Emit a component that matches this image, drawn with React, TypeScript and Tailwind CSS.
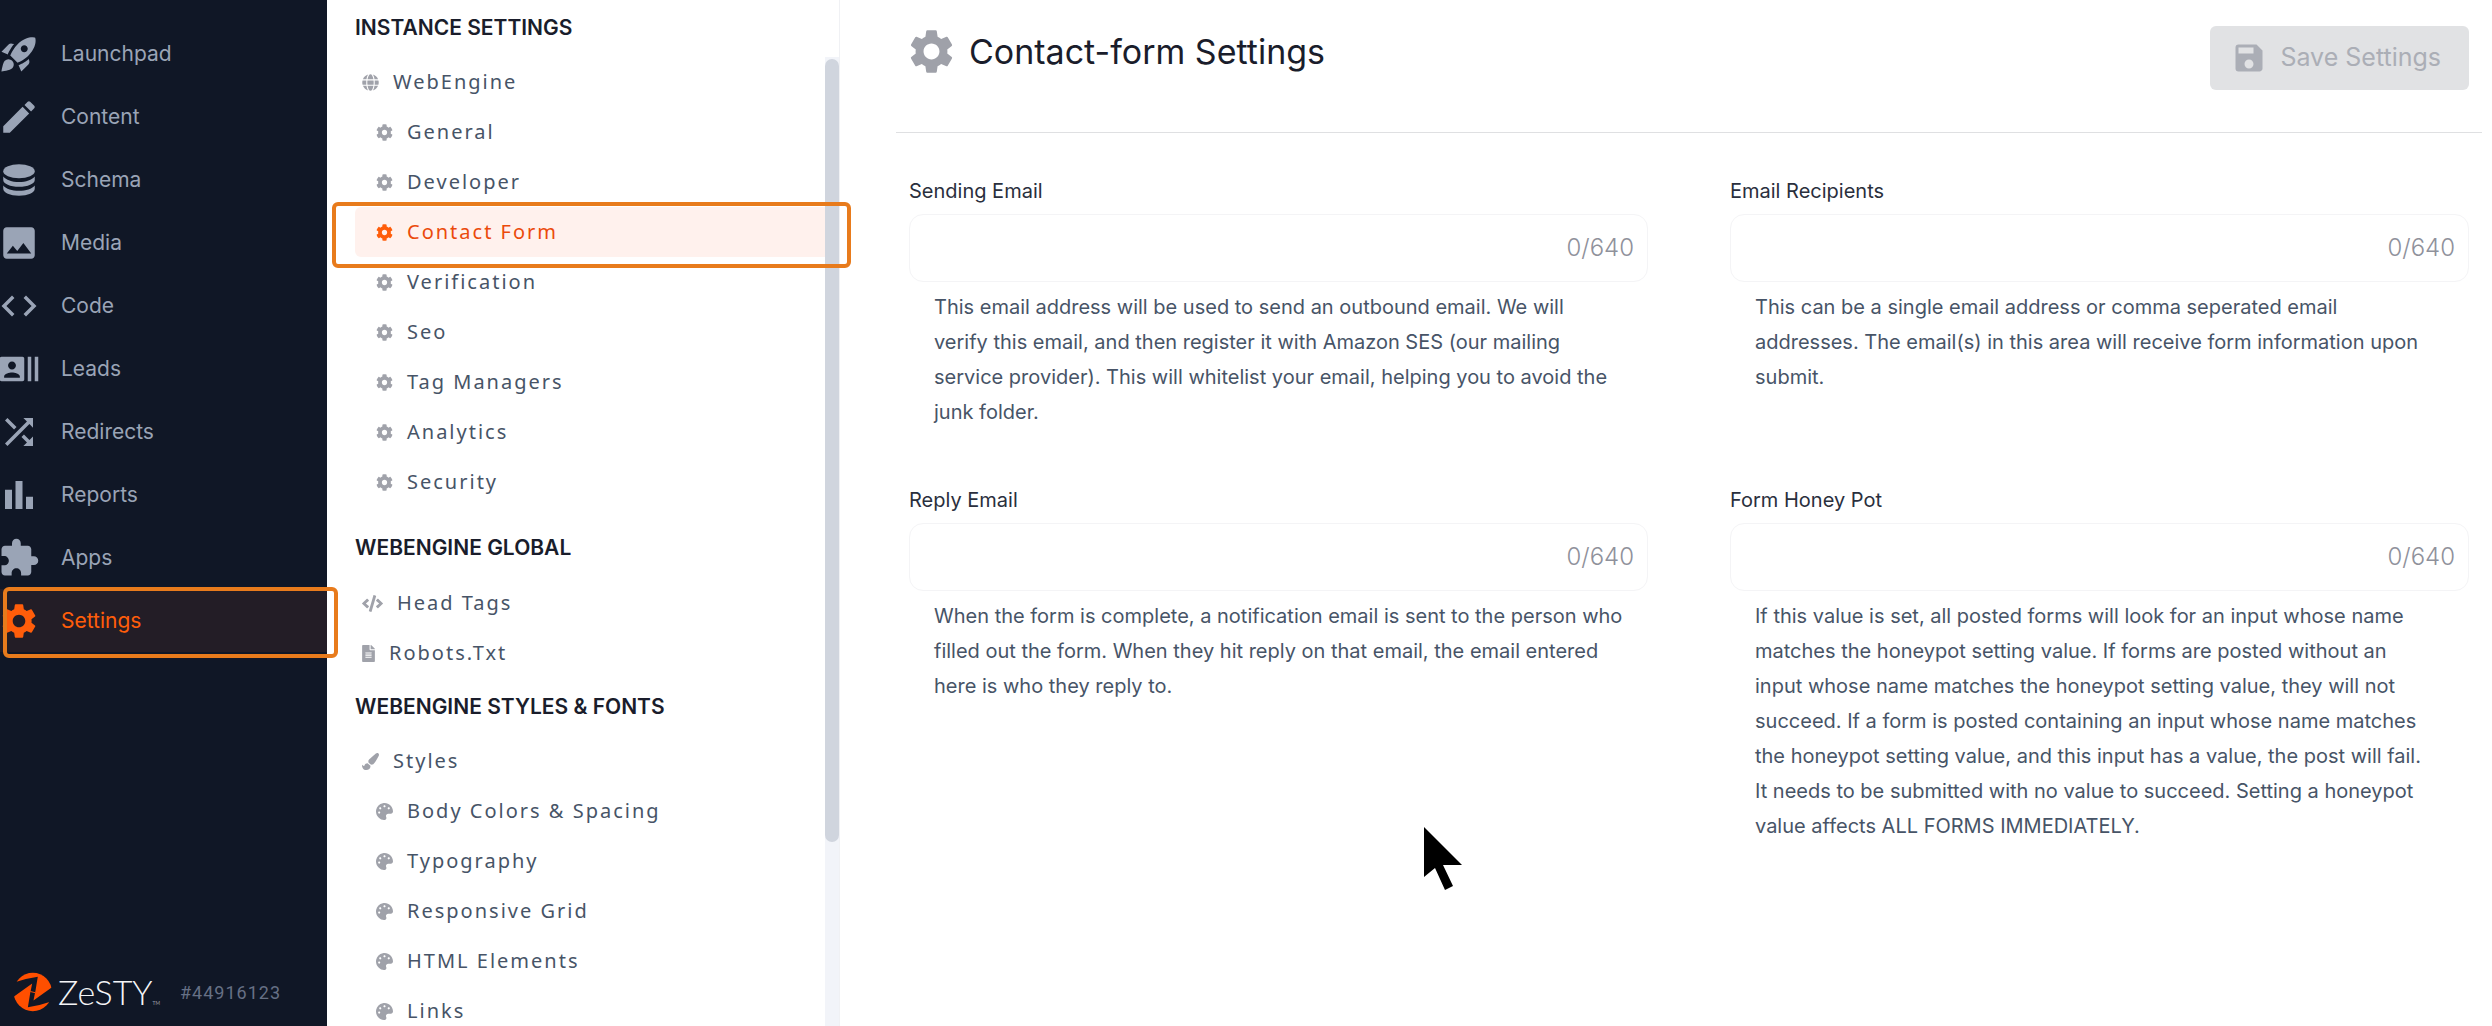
import React from "react";
import type { IconType } from "react-icons";
import {
  MdBarChart,
  MdCode,
  MdEdit,
  MdExtension,
  MdImage,
  MdRecentActors,
  MdRocketLaunch,
  MdSave,
  MdSettings,
  MdShuffle,
} from "react-icons/md";
import { FaCode, FaCog, FaFileAlt, FaGlobe, FaPaintBrush, FaPalette } from "react-icons/fa";

function SchemaIcon({ className }: { className?: string }) {
  return (
    <svg viewBox="0 0 24 24" fill="currentColor" className={className} aria-hidden="true">
      <ellipse cx="12" cy="7" rx="9" ry="4" />
      <path d="M3 10C4.600 12 8 13.200 12 13.200s7.400-1.200 9-3.200V12c0 2.200-4 3.900-9 3.900S3 14.200 3 12z" />
      <path d="M3 15.200C4.600 17.200 8 18.200 12 18.200s7.400-1 9-3V17c0 2.200-4 4-9 4s-9-1.800-9-4z" />
    </svg>
  );
}

type MainItem = { label: string; icon: React.ComponentType<{ className?: string }>; active?: boolean };

const mainItems: MainItem[] = [
  { label: "Launchpad", icon: MdRocketLaunch },
  { label: "Content", icon: MdEdit },
  { label: "Schema", icon: SchemaIcon },
  { label: "Media", icon: MdImage },
  { label: "Code", icon: MdCode },
  { label: "Leads", icon: MdRecentActors },
  { label: "Redirects", icon: MdShuffle },
  { label: "Reports", icon: MdBarChart },
  { label: "Apps", icon: MdExtension },
  { label: "Settings", icon: MdSettings, active: true },
];

type TreeItem = { label: string; icon: IconType; iconWidth?: string; child?: boolean; active?: boolean };

const webEngine: TreeItem[] = [
  { label: "WebEngine", icon: FaGlobe },
  { label: "General", icon: FaCog, child: true },
  { label: "Developer", icon: FaCog, child: true },
  { label: "Contact Form", icon: FaCog, child: true, active: true },
  { label: "Verification", icon: FaCog, child: true },
  { label: "Seo", icon: FaCog, child: true },
  { label: "Tag Managers", icon: FaCog, child: true },
  { label: "Analytics", icon: FaCog, child: true },
  { label: "Security", icon: FaCog, child: true },
];

const globalItems: TreeItem[] = [
  { label: "Head Tags", icon: FaCode, iconWidth: "w-[21px]" },
  { label: "Robots.Txt", icon: FaFileAlt, iconWidth: "w-[13px]" },
];

const styleItems: TreeItem[] = [
  { label: "Styles", icon: FaPaintBrush },
  { label: "Body Colors & Spacing", icon: FaPalette, child: true },
  { label: "Typography", icon: FaPalette, child: true },
  { label: "Responsive Grid", icon: FaPalette, child: true },
  { label: "HTML Elements", icon: FaPalette, child: true },
  { label: "Links", icon: FaPalette, child: true },
];

const fields = [
  {
    id: "sending-email",
    label: "Sending Email",
    help: "This email address will be used to send an outbound email. We will verify this email, and then register it with Amazon SES (our mailing service provider). This will whitelist your email, helping you to avoid the junk folder.",
  },
  {
    id: "email-recipients",
    label: "Email Recipients",
    help: "This can be a single email address or comma seperated email addresses. The email(s) in this area will receive form information upon submit.",
  },
  {
    id: "reply-email",
    label: "Reply Email",
    help: "When the form is complete, a notification email is sent to the person who filled out the form. When they hit reply on that email, the email entered here is who they reply to.",
  },
  {
    id: "form-honey-pot",
    label: "Form Honey Pot",
    help: "If this value is set, all posted forms will look for an input whose name matches the honeypot setting value. If forms are posted without an input\u00a0whose name matches the honeypot setting value, they will not succeed. If a form is posted containing an input whose name matches the honeypot setting value, and this input has a value, the post will fail. It\u00a0needs to be submitted with no value to succeed. Setting a honeypot value affects ALL FORMS IMMEDIATELY.",
  },
];

function ZestyLogo() {
  return (
    <a href="#home" aria-label="Zesty" className="flex items-center gap-[6px] text-[#f4f5f7]">
      <svg viewBox="42 37 115 118" className="h-10 w-[38px]" aria-hidden="true">
        <circle cx="99" cy="96" r="58" fill="#ff4f00" />
        <path d="M30 72Q70 56 114 50L106 98L92 95L97 70L36 114Z" fill="#101726" />
        <path d="M168 120Q128 136 84 142L92 94L106 97L101 122L162 78Z" fill="#101726" />
        <path d="M91 93L107 97V100L91 96Z" fill="#ff4f00" />
      </svg>
      <span className="flex items-end font-['Lato',sans-serif] text-[34px] leading-[40px] font-light">
        ZeSTY<span className="pb-1 text-[5px] leading-[10px]">TM</span>
      </span>
    </a>
  );
}

function MainNav() {
  return (
    <nav aria-label="Main" className="flex w-[327px] shrink-0 flex-col bg-[#101726] pt-[22px]">
      <ul>
        {mainItems.map(({ label, icon: Icon, active }) => (
          <li key={label}>
            <a
              href={"#" + label.toLowerCase()}
              className={
                active
                  ? "flex h-[63px] items-center gap-[21px] bg-[#231d26] text-[21px] text-[#ff5d0a]"
                  : "flex h-[63px] items-center gap-[21px] text-[21px] text-[#9aa4b6]"
              }
            >
              <Icon className="-ml-[2px] h-[42px] w-[42px] shrink-0" />
              {label}
            </a>
          </li>
        ))}
      </ul>
      <div className="mt-auto flex items-center gap-5 pb-[14px] pl-[14px]">
        <ZestyLogo />
        <span className="font-['Roboto',sans-serif] text-[18px] tracking-[1px] text-[#667085]">#44916123</span>
      </div>
    </nav>
  );
}

function Tree({ items }: { items: TreeItem[] }) {
  return (
    <ul className="font-['Noto_Sans',sans-serif] text-[20px] tracking-[2px]">
      {items.map(({ label, icon: Icon, iconWidth, child, active }) => (
        <li key={label}>
          <a
            href={"#" + label.toLowerCase().replace(/\W+/g, "-")}
            className={
              "flex h-[50px] items-center gap-[14px] rounded-l-md " +
              (child ? "pl-[21px] " : "pl-[7px] ") +
              (active ? "bg-[#fff1ed] text-[#eb4a0b]" : "text-[#475467]")
            }
          >
            <Icon
              className={"h-[17px] shrink-0 " + (iconWidth ?? "w-[17px]") + (active ? " text-[#ff5d0a]" : " text-[#a0a2aa]")}
            />
            {label}
          </a>
        </li>
      ))}
    </ul>
  );
}

function GroupTitle({ children }: { children: React.ReactNode }) {
  return <h2 className="text-[21px] leading-[30px] font-semibold text-[#1a1d2b]">{children}</h2>;
}

function SettingsNav() {
  return (
    <aside className="flex w-[513px] shrink-0 flex-col border-r border-[#f0f1f4] pt-[13px]">
      <div className="pl-7">
        <GroupTitle>INSTANCE SETTINGS</GroupTitle>
      </div>
      <div className="mt-[14px] flex min-h-0 flex-1">
        <div className="flex-1 overflow-hidden pl-7">
          <Tree items={webEngine} />
          <div className="pt-[26px] pb-[15px]">
            <GroupTitle>WEBENGINE GLOBAL</GroupTitle>
          </div>
          <Tree items={globalItems} />
          <div className="pt-[14px] pb-[14px]">
            <GroupTitle>WEBENGINE STYLES &amp; FONTS</GroupTitle>
          </div>
          <Tree items={styleItems} />
        </div>
        <div className="w-[14px] bg-[#f2f4f9] pt-[2px]">
          <div className="h-[81%] rounded-full bg-[#d0d5de]" />
        </div>
      </div>
    </aside>
  );
}

function Field({ id, label, help }: { id: string; label: string; help: string }) {
  return (
    <div>
      <label htmlFor={id} className="block text-[20px] leading-[34px] text-[#2a2f3d]">
        {label}
      </label>
      <div className="mt-[6px] flex h-[68px] items-center rounded-[14px] border border-[#f4f4f6] pr-[13px] pl-4">
        <input id={id} type="text" aria-describedby={id + "-help"} className="h-full min-w-0 flex-1 text-[20px] outline-none" />
        <span className="text-[24px] font-light text-[#8f919b]">0/640</span>
      </div>
      <p id={id + "-help"} className="mt-2 px-[25px] text-[20px] leading-[35px] text-[#475467]">
        {help}
      </p>
    </div>
  );
}

export default function App() {
  return (
    <div className="relative flex h-screen overflow-hidden bg-white font-['Inter',sans-serif]">
      <MainNav />
      <SettingsNav />
      <main className="min-w-0 flex-1 pr-[10px] pl-14">
        <header className="flex h-[133px] items-start justify-between border-b border-[#dfe0e2] pt-[26px] pr-[13px] pl-[9px]">
          <h1 className="flex h-[50px] items-center gap-[11px] text-[34px] text-[#1a1d2b]">
            <MdSettings className="h-[53px] w-[53px] text-[#9fa1a9]" />
            Contact-form Settings
          </h1>
          <button
            type="button"
            disabled
            className="flex h-16 items-center gap-[13px] rounded-md bg-[#e1e2e4] pr-7 pl-[21px] text-[25px] text-[#abaeb6]"
          >
            <MdSave className="h-9 w-9" />
            Save Settings
          </button>
        </header>
        <form className="grid grid-cols-2 gap-x-[82px] gap-y-[53px] pt-[41px] pr-[13px] pl-[13px]">
          {fields.map((f) => (
            <Field key={f.id} {...f} />
          ))}
        </form>
      </main>

      <div className="pointer-events-none absolute top-[587px] left-[3px] h-[71px] w-[335px] rounded-md border-4 border-[#e87b1c]" />
      <div className="pointer-events-none absolute top-[202px] left-[332px] h-[66px] w-[519px] rounded-md border-4 border-[#e87b1c]" />
      <svg
        viewBox="0 0 38 63"
        className="pointer-events-none absolute top-[827px] left-[1424px] h-[63px] w-[38px]"
        aria-hidden="true"
      >
        <path d="M0 0L38 38H19L29 59L21 63L11 41L0 50Z" fill="#000" />
      </svg>
    </div>
  );
}
